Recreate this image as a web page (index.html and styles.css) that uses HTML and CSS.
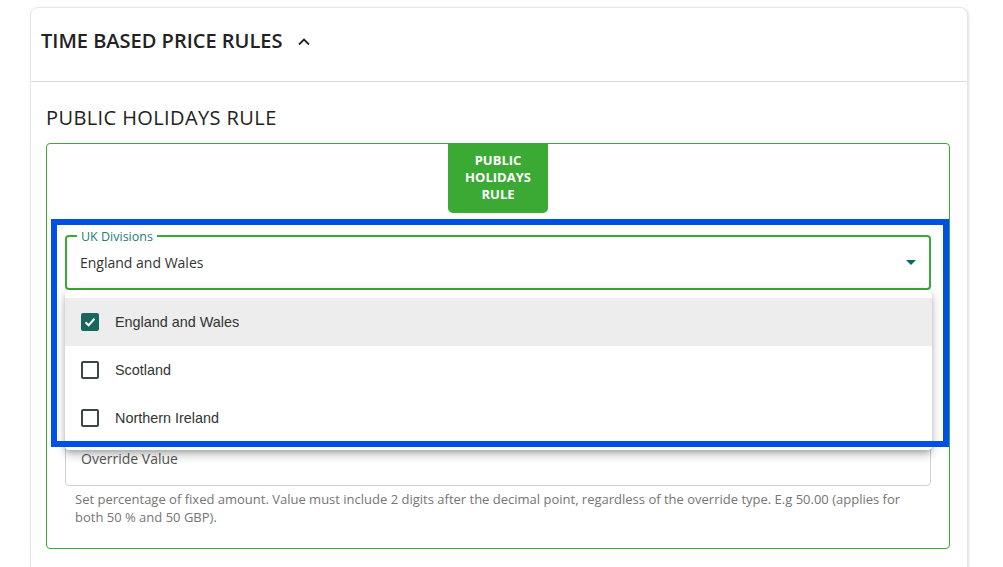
FILE: index.html
```html
<!DOCTYPE html>
<html lang="en">
<head>
<meta charset="utf-8">
<title>Time Based Price Rules</title>
<link rel="stylesheet" href="styles.css">
</head>
<body>
<section class="card">
  <header class="card-header">
    <h2 class="card-title">TIME BASED PRICE RULES</h2>
    <svg class="chevron" width="14" height="9" viewBox="0 0 14 9" aria-hidden="true"><polyline points="2,7.5 7,2.5 12,7.5" fill="none" stroke="#222" stroke-width="1.8"/></svg>
  </header>
  <div class="card-body">
    <h3 class="rule-title">PUBLIC HOLIDAYS RULE</h3>
    <div class="rule-box">
      <div class="rule-tab">PUBLIC<br>HOLIDAYS<br>RULE</div>

      <div class="select-wrap">
        <div class="field select">
          <span class="field-label">UK Divisions</span>
          <span class="field-value">England and Wales</span>
          <svg class="caret" width="10" height="5" viewBox="0 0 10 5" aria-hidden="true"><polygon points="0,0 10,0 5,5" fill="#00696b"/></svg>
        </div>
        <ul class="menu">
          <li class="menu-item selected"><span class="check checked"><svg width="14" height="14" viewBox="0 0 14 14"><polyline points="2.5,7.2 5.6,10.2 11.5,3.8" fill="none" stroke="#fff" stroke-width="2"/></svg></span>England and Wales</li>
          <li class="menu-item"><span class="check"></span>Scotland</li>
          <li class="menu-item"><span class="check"></span>Northern Ireland</li>
        </ul>
      </div>

      <div class="field override"><span class="field-value muted">Override Value</span></div>
      <p class="helper">Set percentage of fixed amount. Value must include 2 digits after the decimal point, regardless of the override type. E.g 50.00 (applies for both 50 % and 50 GBP).</p>

      <div class="highlight" aria-hidden="true"></div>
    </div>
  </div>
</section>
</body>
</html>
```
FILE: styles.css
```css
* { box-sizing: border-box; }
html, body { margin: 0; padding: 0; background: #fff; }
body {
  font-family: "Open Sans", "Noto Sans", sans-serif;
  color: #222;
  overflow: hidden;
}

.card {
  margin: 7px 0 0 30px;
  width: 938px;
  border: 1px solid #e7e7e7;
  border-radius: 8px;
  box-shadow: 1px 1px 3px rgba(0, 0, 0, 0.12);
  background: #fff;
}

.card-header {
  height: 74px;
  padding: 20px 10px 0;
  display: flex;
  align-items: flex-start;
  gap: 15px;
  border-bottom: 1px solid #dcdcdc;
}
.card-title {
  margin: 0;
  font-size: 20px;
  font-weight: 600;
  line-height: 26px;
  color: #222;
}
.chevron { margin-top: 9px; }

.card-body {
  padding: 23px 17px 30px 15px;
}
.rule-title {
  margin: 0 0 12px;
  font-size: 20px;
  font-weight: 400;
  letter-spacing: 0.4px;
  line-height: 26px;
  color: #222;
}

.rule-box {
  position: relative;
  border: 1px solid #3aaa35;
  border-radius: 4px;
  padding: 0 18px 22px;
}
.rule-tab {
  width: 100px;
  height: 70px;
  margin: -1px auto 0;
  background: #3aaa35;
  color: #fff;
  border-radius: 0 0 5px 5px;
  font-size: 13px;
  font-weight: 700;
  line-height: 17px;
  text-align: center;
  padding-top: 9px;
}

.select-wrap {
  position: relative;
  margin-top: 22px;
}
.field {
  position: relative;
  display: flex;
  align-items: center;
  height: 56px;
  border: 1px solid #cfcfcf;
  border-radius: 4px;
  padding: 0 14px 0 15px;
}
.field.select {
  height: 55px;
  border: 2px solid #3aaa35;
  padding: 0 13px;
  justify-content: space-between;
}
.field-label {
  position: absolute;
  top: -8px;
  left: 10px;
  padding: 0 4px;
  background: #fff;
  font-size: 12.5px;
  line-height: 16px;
  color: #1b7c7a;
}
.field-value {
  font-size: 14px;
  color: #333;
}
.field-value.muted { color: #555; }

.field.override { margin-top: 140px; }

.helper {
  margin: 4px 30px 0 10px;
  font-size: 13px;
  line-height: 18px;
  color: #757575;
}

.menu {
  position: absolute;
  top: 100%;
  left: 0;
  right: -1px;
  z-index: 2;
  margin: 0;
  padding: 8px 0;
  list-style: none;
  background: #fff;
  border-radius: 4px;
  box-shadow: 0 3px 5px -1px rgba(0,0,0,0.2), 0 6px 10px 0 rgba(0,0,0,0.14), 0 1px 14px 0 rgba(0,0,0,0.10);
}
.menu-item {
  display: flex;
  align-items: center;
  gap: 16px;
  height: 48px;
  padding-left: 16px;
  font-family: "Liberation Sans", Arial, sans-serif;
  font-size: 14.4px;
  color: #2f3433;
}
.menu-item.selected { background: #ededed; }
.check {
  width: 18px;
  height: 18px;
  border: 2px solid #3a4745;
  border-radius: 2px;
  display: flex;
  align-items: center;
  justify-content: center;
  flex: none;
}
.check.checked {
  background: #17675f;
  border-color: #17675f;
}

.highlight {
  position: absolute;
  z-index: 3;
  left: 4px;
  top: 75px;
  width: 898px;
  height: 228px;
  border: 6px solid #0050e6;
  pointer-events: none;
}
```
